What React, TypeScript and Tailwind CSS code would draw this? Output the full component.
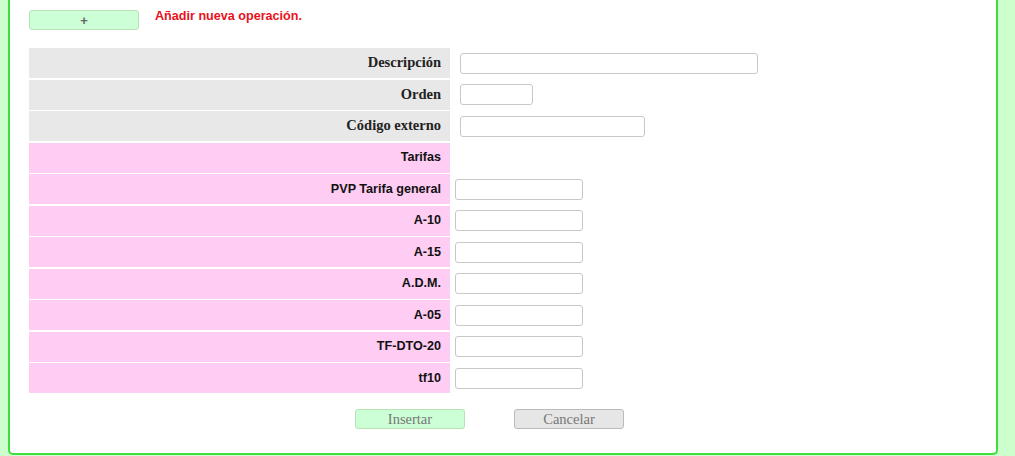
import React from "react";

const serif = { fontFamily: '"Liberation Serif", "Times New Roman", serif' };
const sans = { fontFamily: '"Liberation Sans", Arial, sans-serif' };

type Row = { label: string; kind: "gray" | "pink"; input?: number };

const rows: Row[] = [
  { label: "Descripción", kind: "gray", input: 298 },
  { label: "Orden", kind: "gray", input: 73 },
  { label: "Código externo", kind: "gray", input: 185 },
  { label: "Tarifas", kind: "pink" },
  { label: "PVP Tarifa general", kind: "pink", input: 128 },
  { label: "A-10", kind: "pink", input: 128 },
  { label: "A-15", kind: "pink", input: 128 },
  { label: "A.D.M.", kind: "pink", input: 128 },
  { label: "A-05", kind: "pink", input: 128 },
  { label: "TF-DTO-20", kind: "pink", input: 128 },
  { label: "tf10", kind: "pink", input: 128 },
];

export default function App() {
  return (
    <div className="h-[456px] w-[1015px] overflow-hidden bg-[#ccffcc] pl-2">
      <div className="h-[455px] w-[990px] rounded-b-[5px] border-2 border-t-0 border-[#3fdd3f] bg-white pl-[19px] pt-[10px]">
        <div className="flex items-start">
          <button
            className="flex h-[20px] w-[110px] items-center justify-center rounded-[3px] border border-[#b5e3b5] bg-[#ccffd6] text-[13px] font-bold leading-none text-[#666]"
            style={sans}
          >
            +
          </button>
          <span
            className="ml-[16px] mt-[-2px] text-[12.6px] font-bold leading-[16px] text-[#e8121c]"
            style={sans}
          >
            Añadir nueva operación.
          </span>
        </div>

        <div className="mt-[18px] flex flex-col gap-[1.5px]">
          {rows.map((r) => (
            <div key={r.label} className="flex h-[30px] items-stretch">
              <div
                className={
                  r.kind === "gray"
                    ? "flex w-[421px] items-center justify-end bg-[#e8e8e8] pr-[9px] text-[14.5px] font-bold text-[#222]"
                    : "flex w-[421px] items-center justify-end bg-[#ffccf3] pr-[9px] text-[12.6px] font-bold text-[#111]"
                }
                style={r.kind === "gray" ? serif : sans}
              >
                {r.label}
              </div>
              <div
                className={
                  r.kind === "gray"
                    ? "flex items-center pl-[10px]"
                    : "flex items-center pl-[5px]"
                }
              >
                {r.input ? (
                  <div
                    className="h-[21px] rounded-[3px] border border-[#c8c8c8] bg-white"
                    style={{ width: r.input }}
                  />
                ) : null}
              </div>
            </div>
          ))}
        </div>

        <div className="mt-[16px] flex pl-[326px]">
          <button
            className="flex h-[20px] w-[110px] items-center justify-center rounded-[3px] border border-[#b5e3b5] bg-[#ccffd6] text-[14.5px] leading-none text-[#777]"
            style={serif}
          >
            Insertar
          </button>
          <button
            className="ml-[49px] flex h-[20px] w-[110px] items-center justify-center rounded-[3px] border border-[#bbbbbb] bg-[#e6e6e6] text-[14.5px] leading-none text-[#777]"
            style={serif}
          >
            Cancelar
          </button>
        </div>
      </div>
    </div>
  );
}
